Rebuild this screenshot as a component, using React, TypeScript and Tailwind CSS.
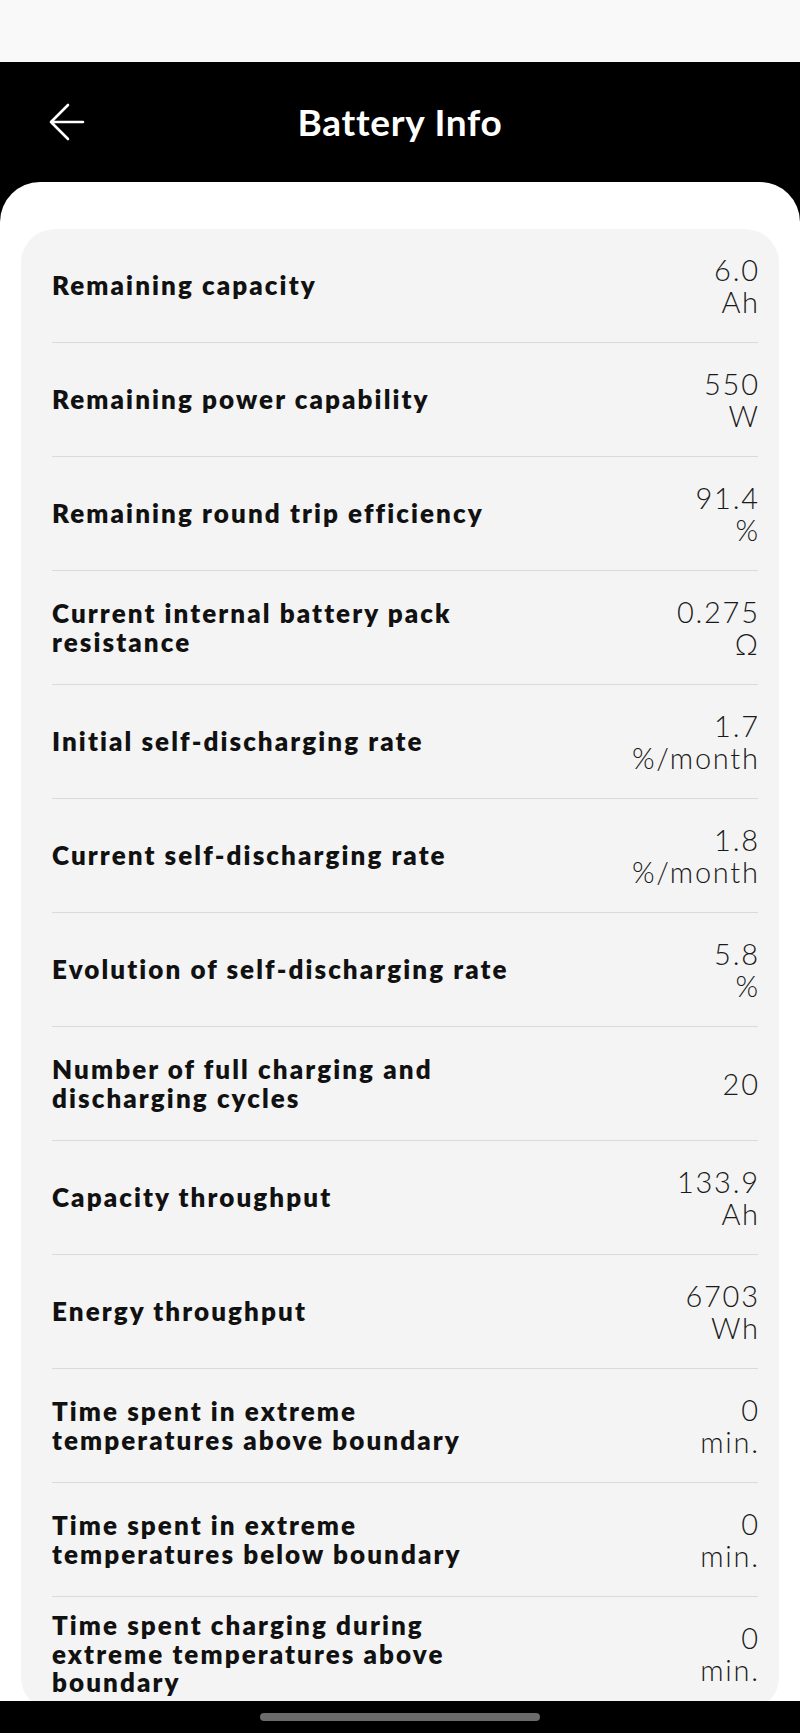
import { ReactNode } from "react";

interface InfoRow {
  label: string;
  value: string;
  unit?: string;
}

const rows: InfoRow[] = [
  { label: "Remaining capacity", value: "6.0", unit: "Ah" },
  { label: "Remaining power capability", value: "550", unit: "W" },
  { label: "Remaining round trip efficiency", value: "91.4", unit: "%" },
  { label: "Current internal battery pack resistance", value: "0.275", unit: "Ω" },
  { label: "Initial self-discharging rate", value: "1.7", unit: "%/month" },
  { label: "Current self-discharging rate", value: "1.8", unit: "%/month" },
  { label: "Evolution of self-discharging rate", value: "5.8", unit: "%" },
  { label: "Number of full charging and discharging cycles", value: "20" },
  { label: "Capacity throughput", value: "133.9", unit: "Ah" },
  { label: "Energy throughput", value: "6703", unit: "Wh" },
  { label: "Time spent in extreme temperatures above boundary", value: "0", unit: "min." },
  { label: "Time spent in extreme temperatures below boundary", value: "0", unit: "min." },
  {
    label: "Time spent charging during extreme temperatures above boundary",
    value: "0",
    unit: "min.",
  },
];

function Header({ children }: { children: ReactNode }) {
  return (
    <div className="relative flex h-[120px] items-center justify-center bg-black">
      <button className="absolute left-[48px] top-1/2 -translate-y-1/2" aria-label="Back">
        <svg width="38" height="38" viewBox="0 0 38 38" fill="none">
          <path
            d="M35 19H3M20 2L3 19L20 36"
            stroke="white"
            strokeWidth="2.6"
            strokeLinecap="round"
            strokeLinejoin="round"
          />
        </svg>
      </button>
      <h1 className="text-[37px] font-bold tracking-[0.02em] text-white">{children}</h1>
    </div>
  );
}

function Row({ label, value, unit, last }: InfoRow & { last: boolean }) {
  return (
    <div
      className={`flex h-[114px] items-center ${last ? "" : "border-b border-[#dadada]"}`}
    >
      <div className="w-[462px] text-[26px] font-extrabold leading-[28.5px] tracking-[0.08em] text-[#111111]">
        {label}
      </div>
      <div className="flex flex-1 flex-col items-end text-[29px] font-light leading-[32px] tracking-[0.06em] text-[#1a1a1a]">
        <span className="-mr-[0.06em]">{value}</span>
        {unit && <span className="-mr-[0.06em]">{unit}</span>}
      </div>
    </div>
  );
}

export default function App() {
  return (
    <div
      className="relative h-[1733px] w-full overflow-hidden bg-black"
      style={{ fontFamily: "Lato, 'Open Sans', sans-serif" }}
    >
      <div className="h-[62px] bg-[#f9f9f9]" />
      <Header>Battery Info</Header>
      <div className="rounded-t-[40px] bg-white px-[21px] pt-[47px]">
        <div className="rounded-[34px] bg-[#f4f4f4] pl-[31px] pr-[21px]">
          {rows.map((row, i) => (
            <Row key={row.label} {...row} last={i === rows.length - 1} />
          ))}
        </div>
      </div>

      {/* system nav bar */}
      <div className="absolute bottom-0 left-0 right-0 flex h-[32px] items-start justify-center bg-black pt-[12px]">
        <div className="h-[8px] w-[280px] rounded-full bg-[#6b6b6b]" />
      </div>
    </div>
  );
}
